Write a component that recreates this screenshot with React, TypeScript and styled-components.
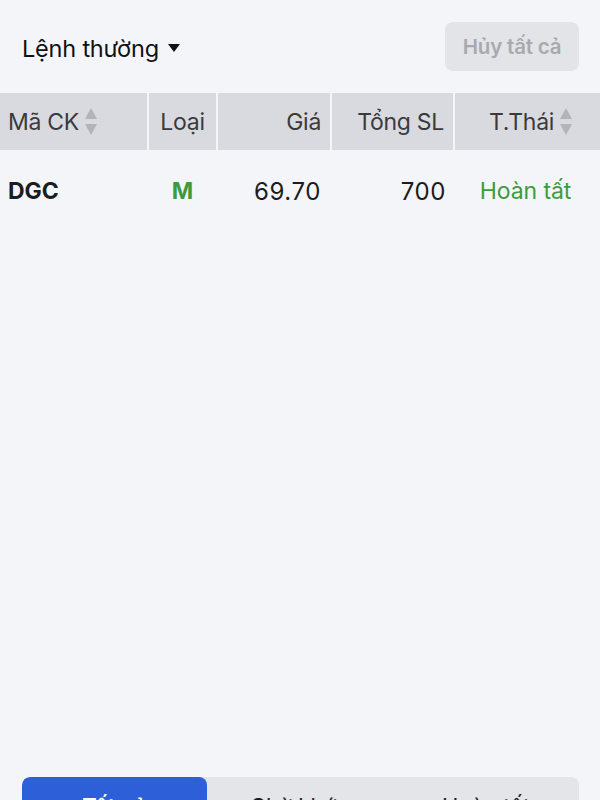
import styled, { createGlobalStyle } from "styled-components";

interface Order {
  symbol: string;
  type: string;
  price: string;
  qty: string;
  status: string;
}

const orders: Order[] = [
  { symbol: "DGC", type: "M", price: "69.70", qty: "700", status: "Hoàn tất" },
];

const tabs = ["Tất cả", "Chờ khớp", "Hoàn tất"];

const GlobalStyle = createGlobalStyle`
  html, body {
    margin: 0;
    padding: 0;
    background: #f4f5f8;
  }
  body {
    font-family: Inter, "Liberation Sans", Arial, sans-serif;
    color: #1c1c1e;
  }
`;

const Page = styled.div`
  height: 800px;
  overflow: hidden;
  background: #f4f5f8;
  padding-top: 22px;
  box-sizing: border-box;
`;

const TopBar = styled.div`
  height: 49px;
  padding: 0 21px 0 22px;
  display: flex;
  align-items: center;
  justify-content: space-between;
`;

const OrderKind = styled.div`
  display: flex;
  align-items: center;
  gap: 9px;
  font-size: 23.5px;
  letter-spacing: -0.2px;
  color: #111;
  padding-top: 3px;
`;

const CancelAll = styled.button`
  width: 134px;
  height: 49px;
  border: none;
  border-radius: 8px;
  background: #e3e4e8;
  color: #a8a9ae;
  font-family: inherit;
  font-size: 20.5px;
  font-weight: 600;
  letter-spacing: -0.2px;
  padding: 0;
`;

const columns = "147px 67px 112px 121px 1fr";

const HeadRow = styled.div`
  margin-top: 22px;
  height: 57px;
  display: grid;
  grid-template-columns: ${columns};
  column-gap: 2px;
`;

type Align = "left" | "center" | "right";

const HeadCell = styled.div<{ $align: Align; $pad?: string }>`
  background: #d9dadf;
  display: flex;
  align-items: center;
  justify-content: ${(p) =>
    p.$align === "left" ? "flex-start" : p.$align === "right" ? "flex-end" : "center"};
  padding: ${(p) => p.$pad || "0"};
  gap: 6px;
  font-size: 23px;
  letter-spacing: -0.3px;
  color: #3a3a3c;
`;

const DataRow = styled.div`
  height: 78px;
  display: grid;
  grid-template-columns: ${columns};
  column-gap: 2px;
  align-items: center;
`;

const Cell = styled.div<{
  $align: Align;
  $pad?: string;
  $color?: string;
  $bold?: boolean;
  $num?: boolean;
}>`
  text-align: ${(p) => p.$align};
  padding: ${(p) => p.$pad || "0"};
  color: ${(p) => p.$color || "#1c1c1e"};
  font-weight: ${(p) => (p.$bold ? 700 : 400)};
  font-size: ${(p) => (p.$num ? "24px" : "23px")};
  letter-spacing: ${(p) => (p.$num ? "0.6px" : "-0.1px")};
  padding-top: 4px;
`;

const Empty = styled.div`
  height: 549px;
`;

const TabBar = styled.div`
  margin: 0 21px 0 22px;
  height: 56px;
  display: grid;
  grid-template-columns: 185px 1fr 1fr;
  background: #e4e5e9;
  border-radius: 8px;
  overflow: hidden;
`;

const Tab = styled.div<{ $active?: boolean }>`
  background: ${(p) => (p.$active ? "#2d5fd8" : "transparent")};
  color: ${(p) => (p.$active ? "#fff" : "#1c1c1e")};
  font-size: 22px;
  font-weight: ${(p) => (p.$active ? 600 : 400)};
  text-align: center;
  padding-top: 16px;
  border-radius: ${(p) => (p.$active ? "8px" : "0")};
`;

function Caret() {
  return (
    <svg width="12" height="8" viewBox="0 0 12 8">
      <path d="M0 0 H12 L6 8 Z" fill="#111" />
    </svg>
  );
}

function SortIcon() {
  return (
    <svg width="12" height="27" viewBox="0 0 12 27">
      <path d="M6 0 L12 11 H0 Z" fill="#b2b4b9" />
      <path d="M0 16 H12 L6 27 Z" fill="#b2b4b9" />
    </svg>
  );
}

export default function App() {
  return (
    <>
      <GlobalStyle />
      <Page>
        <TopBar>
          <OrderKind>
            Lệnh thường
            <Caret />
          </OrderKind>
          <CancelAll>Hủy tất cả</CancelAll>
        </TopBar>

        <HeadRow>
          <HeadCell $align="left" $pad="0 0 0 8px">
            Mã CK
            <SortIcon />
          </HeadCell>
          <HeadCell $align="center">Loại</HeadCell>
          <HeadCell $align="right" $pad="0 9px 0 0">
            Giá
          </HeadCell>
          <HeadCell $align="right" $pad="0 9px 0 0">
            Tổng SL
          </HeadCell>
          <HeadCell $align="center" $pad="0 0 0 6px">
            T.Thái
            <SortIcon />
          </HeadCell>
        </HeadRow>

        {orders.map((o) => (
          <DataRow key={o.symbol}>
            <Cell $align="left" $pad="0 0 0 8px" $bold>
              {o.symbol}
            </Cell>
            <Cell $align="center" $bold $color="#3b9c3e">
              {o.type}
            </Cell>
            <Cell $align="right" $pad="0 9px 0 0" $num>
              {o.price}
            </Cell>
            <Cell $align="right" $pad="0 7px 0 0" $num>
              {o.qty}
            </Cell>
            <Cell $align="center" $pad="0 4px 0 0" $color="#3b9c3e">
              {o.status}
            </Cell>
          </DataRow>
        ))}

        <Empty />

        <TabBar>
          {tabs.map((t, i) => (
            <Tab key={t} $active={i === 0}>
              {t}
            </Tab>
          ))}
        </TabBar>
      </Page>
    </>
  );
}
